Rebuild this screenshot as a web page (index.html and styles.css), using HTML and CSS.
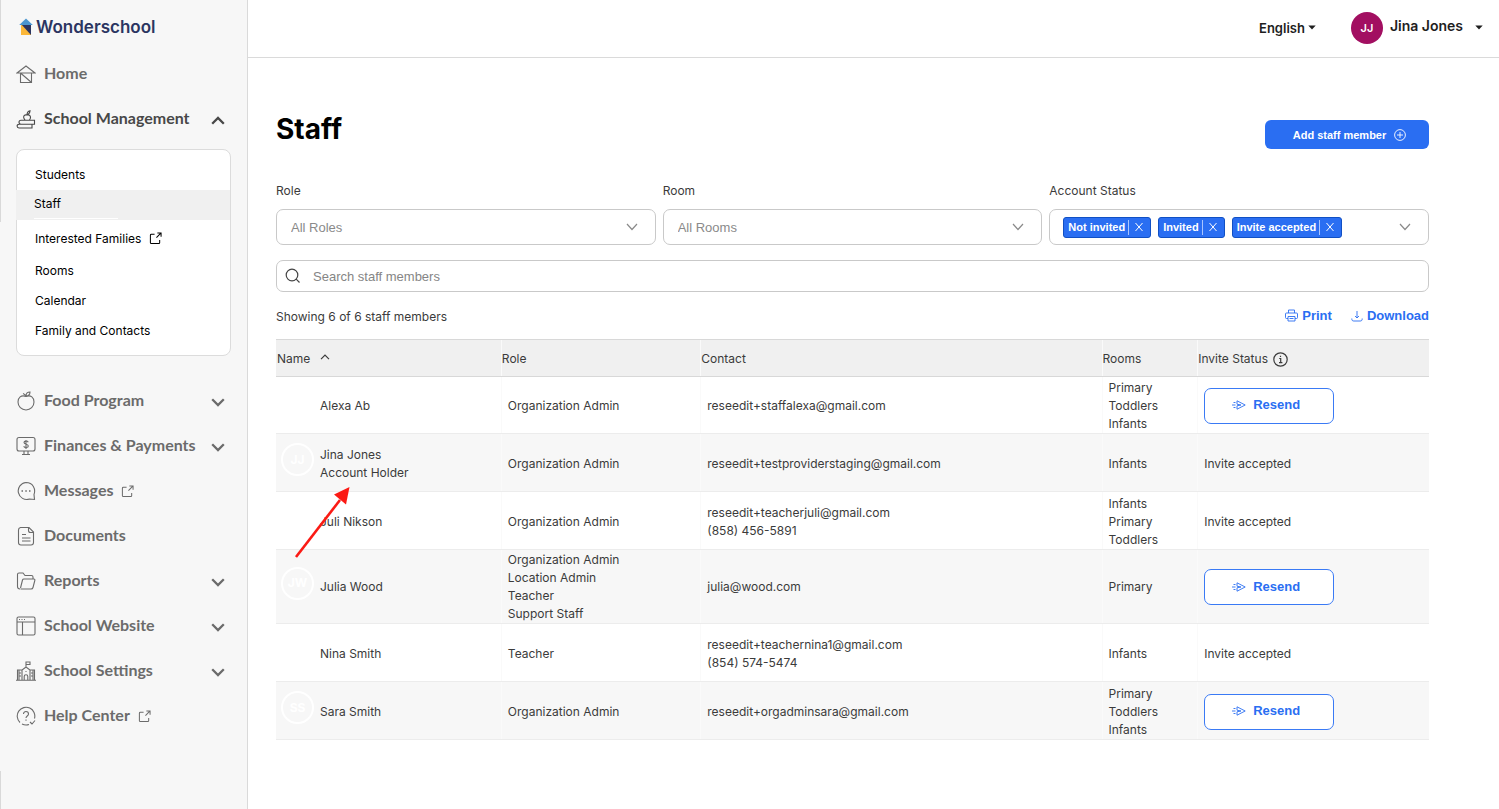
FILE: index.html
```html
<!DOCTYPE html>
<html lang="en">
<head>
<meta charset="utf-8">
<title>Staff - Wonderschool</title>
<link rel="stylesheet" href="styles.css">
</head>
<body>
<svg class="sprite" aria-hidden="true">
  <symbol id="down" viewBox="0 0 14 9"><path d="M1.200 1.200l5.800 5.800 5.800-5.800" fill="none" stroke="currentColor" stroke-width="2.300"/></symbol>
  <symbol id="thin-down" viewBox="0 0 12 8"><path d="M1 1l5 5.500L11 1" fill="none" stroke="currentColor" stroke-width="1.200"/></symbol>
  <symbol id="caret" viewBox="0 0 8 5"><path d="M.3.500h7.400L4 4.500z" fill="currentColor"/></symbol>
  <symbol id="external" viewBox="0 0 14 14"><path d="M6 2.500H2.500A1 1 0 0 0 1.500 3.500v8a1 1 0 0 0 1 1h8a1 1 0 0 0 1-1V8.500M9 1h4v4M13 1 8 6" fill="none" stroke="currentColor" stroke-width="1.100"/></symbol>
  <symbol id="close" viewBox="0 0 10 10"><path d="M1.500 1l7 8M8.500 1l-7 8" fill="none" stroke="currentColor"/></symbol>
  <symbol id="send" viewBox="0 0 14 10"><path d="M5 .800 13.200 5 5 9.200V5.800L9 5 5 4.200zM1.500 2.500h2M0 5h3.500M1.500 7.500h2" fill="none" stroke="currentColor" stroke-width=".9"/></symbol>
</svg>
<div class="app">
  <aside class="sidebar">
    <a class="logo" href="#"><svg width="14" height="18" viewBox="0 0 14 18"><path d="M2 6v11h10V6z" fill="#2b3561"/><path d="M2 6v11h10z" fill="#fbb739"/><path d="M7 .500 13.800 7H.2z" fill="#4c96d0"/></svg><span>Wonderschool</span></a>
    <nav class="nav">
      <a class="item" href="#"><svg class="ico" viewBox="0 0 20 20"><path d="M1 9 10 2l9 7zM4.500 9v9.500h11V9M4.500 9l11 9.500"/></svg>Home</a>
      <button class="item current" type="button"><svg class="ico" viewBox="0 0 20 20"><path d="M3 15.200h13v3.800H3a1.900 1.900 0 0 1 0-3.800zM5 11.200h13.500v4H5a2 2 0 0 1 0-4zM9 11C6.500 8.500 7.500 5.200 11 6c3.500-.8 4.500 2.500 2.500 5M11 6c0-2.500 1-4 3-4.300 0 2-1 3.300-3 4.300"/></svg>School Management<svg class="chev up"><use href="#down"/></svg></button>
      <ul class="sub">
        <li><a href="#">Students</a></li>
        <li class="active"><a href="#">Staff</a></li>
        <li class="wide"><a href="#">Interested Families<svg class="ext"><use href="#external"/></svg></a></li>
        <li><a href="#">Rooms</a></li>
        <li><a href="#">Calendar</a></li>
        <li><a href="#">Family and Contacts</a></li>
      </ul>
      <button class="item" type="button"><svg class="ico" viewBox="0 0 20 20"><path d="M10 5.500C5 3.500 2 6.800 2 11c0 4.500 3.500 8 8 8s8-3.500 8-8c0-4.200-3-7.500-8-5.500zM10 5.500C9.500 4 8.500 3 7 2.500M10 5c0-3 1.500-4 4-4 0 3-1.500 4-4 4z"/></svg>Food Program<svg class="chev"><use href="#down"/></svg></button>
      <button class="item" type="button"><svg class="ico" viewBox="0 0 20 20"><rect x="1" y="1.500" width="18" height="13.500" rx="2"/><path d="M8 15v3.500M12 15v3.500M6 18.500h8M12.200 6.200C11.500 4.500 8 4.800 8 6.600c0 2 4.300 1.200 4.300 3.300 0 2-3.800 2.200-4.600.300M10 4v9"/></svg>Finances &amp; Payments<svg class="chev"><use href="#down"/></svg></button>
      <a class="item" href="#"><svg class="ico" viewBox="0 0 20 20"><path d="M18 13.500C20 8 17 1.500 10 1.500A8.500 8.500 0 1 0 13.500 18l5 .500z"/><path d="M5.500 10h1.500M9.300 10h1.500M13 10h1.500" stroke-width="1.600"/></svg>Messages<svg class="ext"><use href="#external"/></svg></a>
      <a class="item" href="#"><svg class="ico" viewBox="0 0 20 20"><path d="M4.500 1.500H13l4.500 4.500v10.500a2.500 2.500 0 0 1-2.500 2.500H5a2.500 2.500 0 0 1-2.500-2.500V4a2.500 2.500 0 0 1 2-2.500zM12.500 1.500v3a2 2 0 0 0 2 2h3M6 8.500h4M6 12h8.500M6 15h8.500"/></svg>Documents</a>
      <button class="item" type="button"><svg class="ico" viewBox="0 0 20 20"><path d="M4 18a2.500 2.500 0 0 1-2.500-2.500v-12a1.500 1.500 0 0 1 1.500-1.500h4l2 2.500h6.500a1.500 1.500 0 0 1 1.500 1.500v2M4.500 18h10.500a2 2 0 0 0 2-1.500L18.800 9.500a1 1 0 0 0-1-1.500H8a1.500 1.500 0 0 0-1.500 1L4.500 17"/></svg>Reports<svg class="chev"><use href="#down"/></svg></button>
      <button class="item" type="button"><svg class="ico" viewBox="0 0 20 20"><rect x="1" y="1" width="18" height="18" rx="1.500"/><path d="M1 6h18M6.500 6v13M3 3.500h1M5.500 3.500h1M8 3.500h1"/></svg>School Website<svg class="chev"><use href="#down"/></svg></button>
      <button class="item" type="button"><svg class="ico" viewBox="0 0 20 20"><path d="M0 19.300h20M1.500 19V9H6M18.500 19V9H14M6 19V9l4-3 4 3v10M8.200 19v-3.500a1.800 1.800 0 0 1 3.600 0V19M10 6V1h4v2.500h-4M3 12h2M3 15h2M15 12h2M15 15h2M3 9v10M17 9v10M9.500 10.500h1"/></svg>School Settings<svg class="chev"><use href="#down"/></svg></button>
      <a class="item" href="#"><svg class="ico" viewBox="0 0 20 20"><path d="M18.500 12.500A8.800 8.800 0 1 0 4 16.500M6 18a9 9 0 0 0 7 .500M7.500 8c0-3.500 5-3.300 5 0 0 2-2.500 2-2.500 4M10 13.500v1.300M14 16l2 2 3-3.500"/></svg>Help Center<svg class="ext"><use href="#external"/></svg></a>
    </nav>
  </aside>
  <div class="page">
    <header class="topbar">
      <button class="lang" type="button">English<svg class="caret"><use href="#caret"/></svg></button>
      <button class="user" type="button"><span class="avatar">JJ</span><span class="username">Jina Jones</span><svg class="caret"><use href="#caret"/></svg></button>
    </header>
    <main class="content">
      <div class="heading">
        <h1>Staff</h1>
        <button class="add" type="button">Add staff member<svg width="12" height="12" viewBox="0 0 12 12" fill="none" stroke="currentColor" stroke-width=".9"><circle cx="6" cy="6" r="5.400"/><path d="M6 3v6M3 6h6"/></svg></button>
      </div>
      <div class="filters">
        <div class="field"><label for="role">Role</label>
          <div class="box"><select id="role"><option>All Roles</option></select><svg class="arrow"><use href="#thin-down"/></svg></div></div>
        <div class="field"><label for="room">Room</label>
          <div class="box"><select id="room"><option>All Rooms</option></select><svg class="arrow"><use href="#thin-down"/></svg></div></div>
        <div class="field"><span class="label" id="status">Account Status</span>
          <div class="box tags" role="group" aria-labelledby="status">
            <span class="tag">Not invited<button type="button" aria-label="Remove Not invited"><svg><use href="#close"/></svg></button></span>
            <span class="tag">Invited<button type="button" aria-label="Remove Invited"><svg><use href="#close"/></svg></button></span>
            <span class="tag">Invite accepted<button type="button" aria-label="Remove Invite accepted"><svg><use href="#close"/></svg></button></span>
            <svg class="arrow"><use href="#thin-down"/></svg>
          </div></div>
      </div>
      <div class="search"><svg width="16" height="16" viewBox="0 0 16 16" fill="none" stroke="#444" stroke-width="1.200"><circle cx="7" cy="7" r="5.800"/><path d="M11.200 11.200 14.500 14.500"/></svg><input type="search" aria-label="Search staff members" placeholder="Search staff members"></div>
      <div class="summary">
        <span>Showing 6 of 6 staff members</span>
        <div class="actions">
          <a href="#"><svg width="13" height="13" viewBox="0 0 13 13" fill="none" stroke="currentColor" stroke-width=".9"><path d="M3.500 4V1h6v3M3 9.500H1.500a1 1 0 0 1-1-1V5a1 1 0 0 1 1-1h10a1 1 0 0 1 1 1v3.500a1 1 0 0 1-1 1H10M3 7.500h7V12H3zM4.500 9.500h4"/></svg>Print</a>
          <a href="#"><svg width="12" height="12" viewBox="0 0 12 12" fill="none" stroke="currentColor" stroke-width=".9"><path d="M6 1v7M4 6l2 2 2-2M.8 8.500c0 2 .7 2.500 2 2.500h6.400c1.300 0 2-.5 2-2.500"/></svg>Download</a>
        </div>
      </div>
      <div class="table-wrap">
        <table>
          <colgroup><col class="c-name"><col class="c-role"><col class="c-contact"><col class="c-rooms"><col></colgroup>
          <thead><tr>
            <th>Name<svg class="sort" viewBox="0 0 10 6"><path d="M1 5.200 5 1.200l4 4" fill="none" stroke="currentColor" stroke-width="1.200"/></svg></th>
            <th>Role</th><th>Contact</th><th>Rooms</th>
            <th>Invite Status<svg class="info" viewBox="0 0 15 15" fill="none" stroke="currentColor" stroke-width="1.200"><circle cx="7.500" cy="7.500" r="6.700"/><path d="M6.200 6.500h1.500v4M6 10.700h3.400M7.500 3.800v1.300"/></svg></th>
          </tr></thead>
          <tbody>
            <tr><td><div class="person"><span class="initials"></span><span>Alexa Ab</span></div></td><td>Organization Admin</td><td>reseedit+staffalexa@gmail.com</td><td>Primary<br>Toddlers<br>Infants</td><td><button class="resend" type="button"><svg><use href="#send"/></svg>Resend</button></td></tr>
            <tr><td><div class="person"><span class="initials">JJ</span><span>Jina Jones<br>Account Holder</span></div></td><td>Organization Admin</td><td>reseedit+testproviderstaging@gmail.com</td><td>Infants</td><td>Invite accepted</td></tr>
            <tr><td><div class="person"><span class="initials"></span><span>Juli Nikson</span></div></td><td>Organization Admin</td><td>reseedit+teacherjuli@gmail.com<br>(858) 456-5891</td><td>Infants<br>Primary<br>Toddlers</td><td>Invite accepted</td></tr>
            <tr><td><div class="person"><span class="initials">JW</span><span>Julia Wood</span></div></td><td>Organization Admin<br>Location Admin<br>Teacher<br>Support Staff</td><td>julia@wood.com</td><td>Primary</td><td><button class="resend" type="button"><svg><use href="#send"/></svg>Resend</button></td></tr>
            <tr><td><div class="person"><span class="initials"></span><span>Nina Smith</span></div></td><td>Teacher</td><td>reseedit+teachernina1@gmail.com<br>(854) 574-5474</td><td>Infants</td><td>Invite accepted</td></tr>
            <tr><td><div class="person"><span class="initials">SS</span><span>Sara Smith</span></div></td><td>Organization Admin</td><td>reseedit+orgadminsara@gmail.com</td><td>Primary<br>Toddlers<br>Infants</td><td><button class="resend" type="button"><svg><use href="#send"/></svg>Resend</button></td></tr>
          </tbody>
        </table>
        <svg class="pointer" width="58" height="74" viewBox="0 0 58 74" aria-hidden="true"><path d="M2 71 46 14" stroke="#fb1a14" stroke-width="2.600"/><path d="M55.500 1 52 18.500 40 8.500z" fill="#fb1a14"/></svg>
      </div>
    </main>
  </div>
</div>
</body>
</html>
```
FILE: styles.css
```css
* { box-sizing: border-box; }
body { margin: 0; background: #fff; color: #3b3b3b; font: 12px/18px Inter, "Liberation Sans", sans-serif; }
button, input, select { font: inherit; color: inherit; border: 0; padding: 0; margin: 0; background: none; }
button { cursor: pointer; }
a { color: inherit; text-decoration: none; }
.sprite { display: none; }
svg { flex: none; }

.app { display: flex; min-height: 100vh; }
.sidebar {
  width: 248px; flex: none; padding: 15px 16px 0; border-right: 1px solid #dadada;
  background: linear-gradient(#d9d9d9, #d9d9d9) 0 0 / 1px 222px no-repeat, linear-gradient(#d9d9d9, #d9d9d9) 0 771px / 1px 100% no-repeat, #f7f7f7;
}
.logo { display: flex; align-items: center; gap: 3px; padding-left: 3px; height: 24px; color: #2b3561; font-size: 17px; font-weight: 600; }
.nav { display: flex; flex-direction: column; padding-top: 11px; }
.item { display: flex; align-items: center; height: 45px; color: #6b6b6b; font: 700 16px/20px Lato, sans-serif; text-align: left; }
.ico { width: 20px; height: 20px; margin: 2px 8px 0 0; fill: none; stroke: currentColor; stroke-width: 1.1; }
.current { color: #484848; }
.chev { width: 14px; height: 9px; margin: 5px 6px 0 auto; }
.up { transform: rotate(180deg); }
.ext { width: 13px; height: 13px; margin-left: 8px; }
.item .ext { margin-top: 3px; }
.sub { list-style: none; margin: 9px 0 21px; padding: 10px 0 9px; border: 1px solid #dcdcdc; border-radius: 8px; background: #fff; color: #000; }
.sub li { display: flex; align-items: center; height: 30px; padding-left: 18px; }
.sub .active { background: #f0f0f0; margin-left: -1px; }
.sub .active a { flex: 0 0 84px; padding: 3px 0 5px; border-bottom: 1px solid #fff; }
.sub .wide { height: 36px; padding-top: 1px; }
.sub a { display: flex; align-items: center; }

.page { flex: 1; min-width: 0; }
.topbar { display: flex; justify-content: flex-end; align-items: center; gap: 35px; height: 58px; padding: 0 16px 2px 0; border-bottom: 1px solid #dadada; color: #1e1e1e; font-weight: 600; }
.lang, .user { display: flex; align-items: center; }
.lang { font-size: 13px; gap: 3px; }
.user { font-size: 14px; gap: 7px; }
.username { padding-bottom: 3px; }
.user .caret { margin-left: 5px; }
.caret { width: 8px; height: 5px; }
.avatar { display: grid; place-items: center; width: 32px; height: 32px; border-radius: 50%; background: #a20f61; color: #fff; font-size: 11px; }

.content { padding: 51px 70px 40px 28px; }
.heading { display: flex; align-items: flex-start; justify-content: space-between; height: 50px; }
h1 { margin: 0; padding-top: 2px; color: #000; font-size: 28px; line-height: 36px; font-weight: 700; }
.add { display: flex; align-items: center; justify-content: center; gap: 8px; width: 164px; height: 29px; margin-top: 11px; padding-left: 5px; border-radius: 6px; background: #2a6ef2; color: #fff; font: 700 11px/16px "Liberation Sans", sans-serif; }
.filters { display: grid; grid-template-columns: repeat(3, 1fr); gap: 7px; padding-top: 23px; }
.field { display: flex; flex-direction: column; gap: 9px; }
.box { display: grid; grid-template-columns: 1fr 29px; align-items: center; height: 36px; border: 1px solid #c9c9c9; border-radius: 7px; color: #8a8a8a; font: 13px/18px "Liberation Sans", sans-serif; }
.box select { grid-area: 1 / 1 / 2 / 3; height: 34px; padding: 1px 34px 0 14px; appearance: none; }
.box .arrow { grid-area: 1 / 2; pointer-events: none; }
.arrow { width: 12px; height: 8px; }
.box.tags { display: flex; gap: 7px; padding-left: 13px; }
.tags .arrow { margin: 0 17px 0 auto; }
.tag { display: flex; align-items: center; height: 21px; padding: 0 6px 0 4px; border: 1px solid #1150c4; border-radius: 3px; background: #2a6ef2; color: #fff; font: 700 11px/16px "Liberation Sans", sans-serif; white-space: nowrap; }
.tag button { display: grid; place-items: center; margin-left: 3px; padding-left: 5px; height: 15px; border-left: 1px solid #a9c5ff; }
.tag svg { width: 10px; height: 10px; }
.search { display: flex; align-items: center; gap: 12px; height: 32px; margin-top: 15px; padding: 0 8px; border: 1px solid #c9c9c9; border-radius: 7px; }
.search input { flex: 1; min-width: 0; padding-top: 1px; outline: 0; font: 13px/18px "Liberation Sans", sans-serif; }
.search input::placeholder { color: #858585; opacity: 1; }
.summary { display: flex; align-items: center; justify-content: space-between; height: 47px; padding-top: 2px; }
.actions { display: flex; gap: 19px; padding-bottom: 2px; }
.actions a { display: flex; align-items: center; gap: 4px; color: #2a6ef2; font: 700 13px/18px "Liberation Sans", sans-serif; }

.table-wrap { position: relative; }
table { width: 100%; table-layout: fixed; border-collapse: separate; border-spacing: 0; }
.c-name { width: 19.5%; }
.c-role { width: 17.3%; }
.c-contact { width: 34.8%; }
.c-rooms { width: 8.3%; }
th { height: 38px; padding: 1px 1px 0; background: #f0f0f0; border: solid #d8d8d8; border-width: 1px 0; font-weight: 400; text-align: left; }
td { height: 58px; padding: 2px 7px 0; border-bottom: 1px solid #ececec; }
tr:first-child td { height: 57px; padding-top: 1px; }
tr:nth-child(4) td { padding-top: 1px; }
th + th, td + td { background-image: linear-gradient(#fafafa, #fafafa); background-size: 1px 100%; background-repeat: no-repeat; }
tbody tr:nth-child(even) td { background-color: #f7f7f7; }
td:first-child { padding-left: 5px; }
.sort { width: 10px; height: 6px; margin: 0 0 3px 10px; }
.info { width: 15px; height: 15px; margin-left: 5px; vertical-align: -4px; }
.person { display: flex; align-items: center; gap: 6px; }
.initials { display: grid; place-items: center; width: 33px; height: 33px; flex: none; margin-bottom: 8px; border: 2px solid #fff; border-radius: 50%; color: #fff; font-size: 12px; font-weight: 700; }
.resend { display: flex; align-items: center; justify-content: center; gap: 7px; width: 130px; height: 36px; padding: 0 6px 1px 0; border: 1px solid #3a7af5; border-radius: 7px; background: #fff; color: #2a6ef2; font: 700 13px/18px "Liberation Sans", sans-serif; }
.resend svg { width: 14px; height: 10px; }
.pointer { position: absolute; left: 18px; top: 147px; pointer-events: none; }
```
